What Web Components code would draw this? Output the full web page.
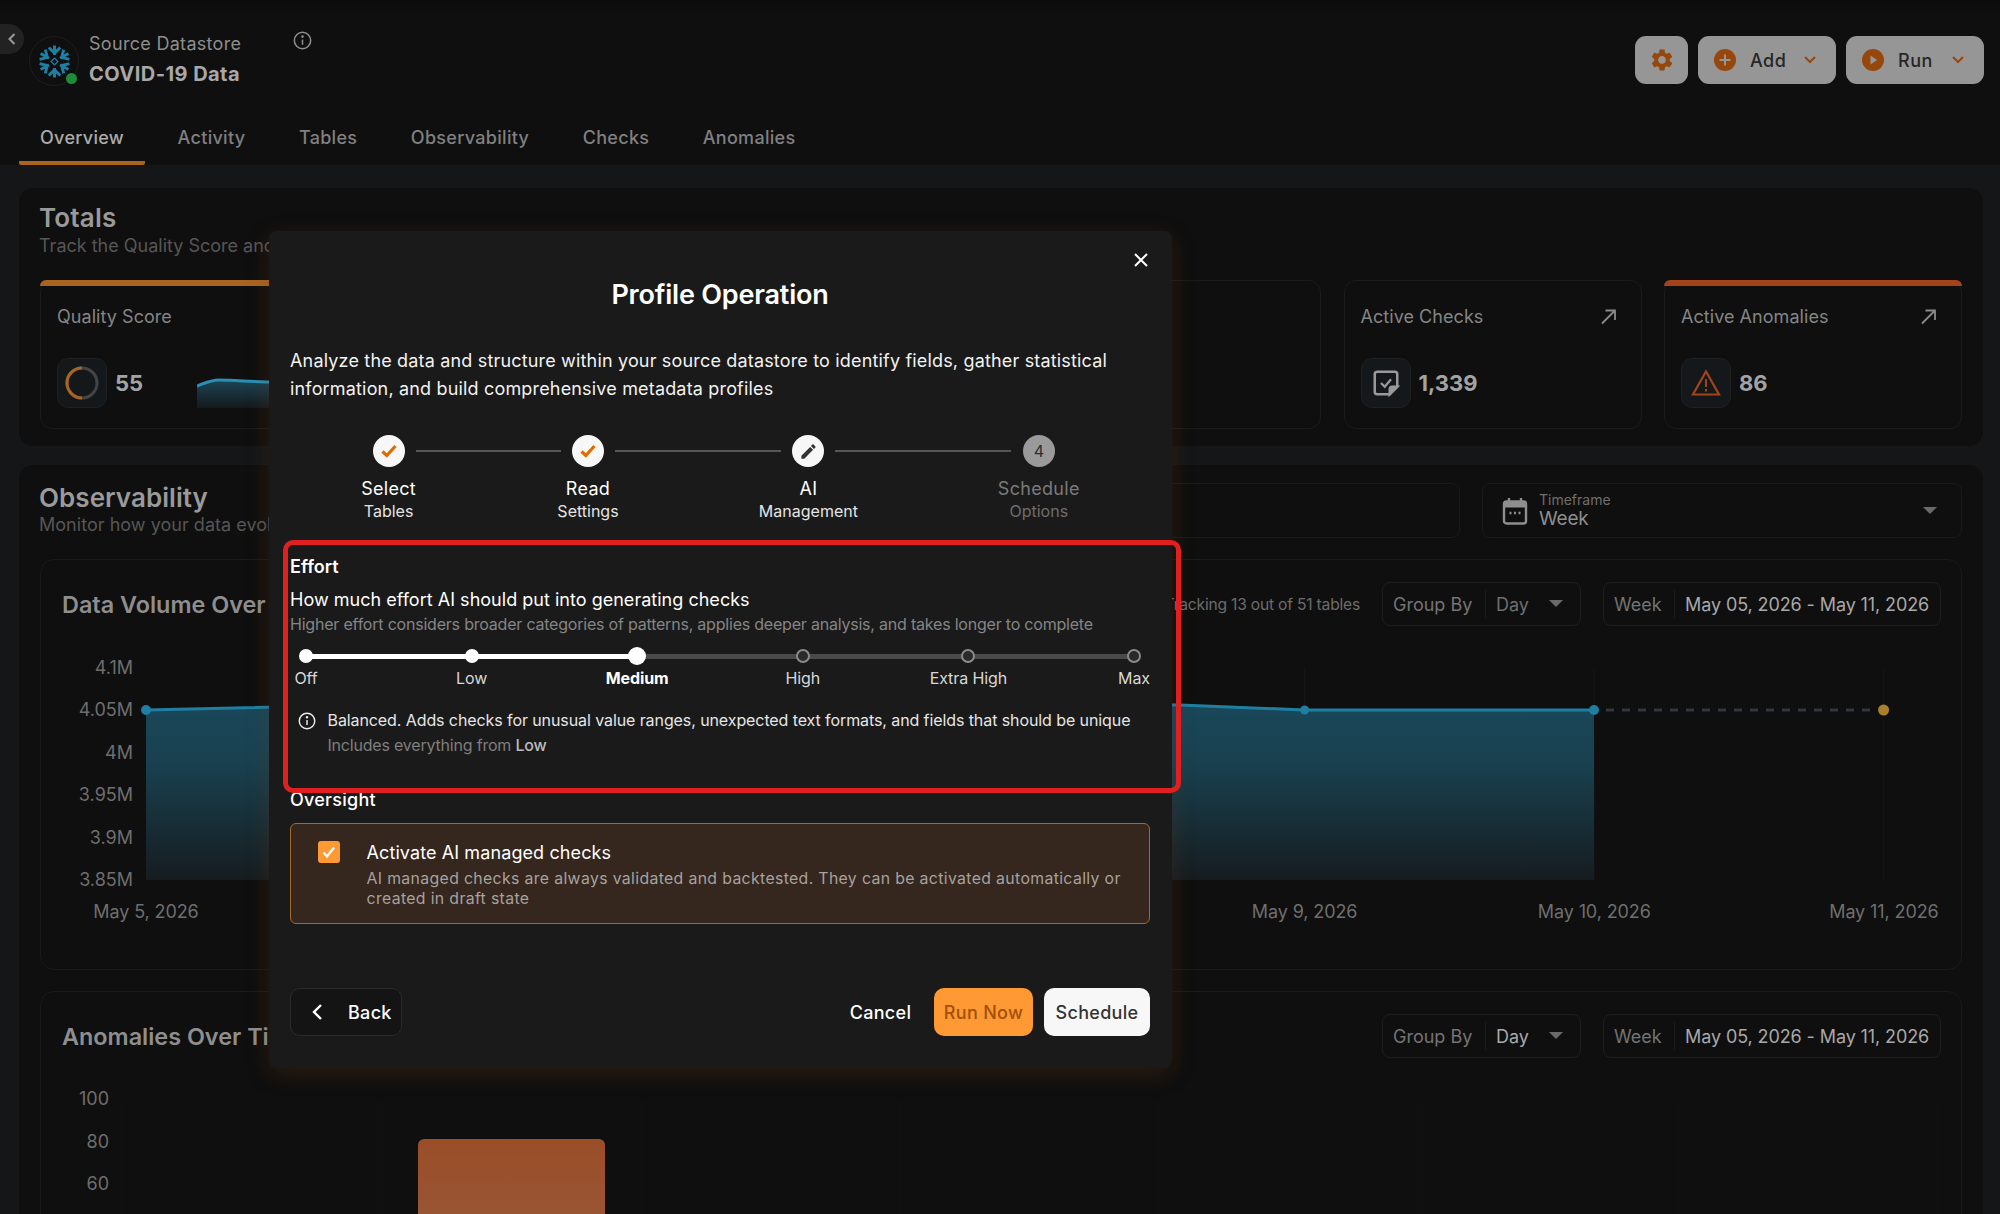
<!DOCTYPE html>
<html><head><meta charset="utf-8">
<style>
html,body{margin:0;padding:0;background:#141618;}
body{font-family:Inter,"Liberation Sans",sans-serif;letter-spacing:-.2px;}
</style></head><body>
<app-shell></app-shell>
<script>
function comp(name, css, html){
  customElements.define(name, class extends HTMLElement{
    constructor(){super();const t=document.createElement('template');t.innerHTML='<style>'+css+'</style>'+html;this.attachShadow({mode:'open'}).appendChild(t.content.cloneNode(true));}
  });
}
const chev='<svg width="16" height="16" viewBox="0 0 16 16" fill="none" stroke="#96480c" stroke-width="2" style="display:block"><path d="M3 5l5 5 5-5"/></svg>';
const caret=`<svg width="14" height="8" viewBox="0 0 14 8" style="display:block"><path d="M0 0h14L7 7z" fill="#6a6a6a"/></svg>`;
const arrow='<svg width="17" height="17" viewBox="0 0 17 17" fill="none" stroke="#8a8a8a" stroke-width="1.8" style="display:block"><path d="M2 15.5L15 2.5M5.5 2.5H15V12"/></svg>';
const info=(c,s)=>`<svg width="${s}" height="${s}" viewBox="0 0 20 20" fill="none" stroke="${c}" stroke-width="1.6"><circle cx="10" cy="10" r="8.6"/><path d="M10 9v5.5"/><circle cx="10" cy="5.9" r=".6" fill="${c}"/></svg>`;
const gear='M19.14 12.94c.04-.3.06-.61.06-.94 0-.32-.02-.64-.07-.94l2.03-1.58c.18-.14.23-.41.12-.61l-1.92-3.32c-.12-.22-.37-.29-.59-.22l-2.39.96c-.5-.38-1.03-.7-1.62-.94l-.36-2.54c-.04-.24-.24-.41-.48-.41h-3.84c-.24 0-.43.17-.47.41l-.36 2.54c-.59.24-1.13.57-1.62.94l-2.39-.96c-.22-.08-.47 0-.59.22L2.74 8.87c-.12.21-.08.47.12.61l2.03 1.58c-.05.3-.09.63-.09.94s.02.64.07.94l-2.03 1.58c-.18.14-.23.41-.12.61l1.92 3.32c.12.22.37.29.59.22l2.39-.96c.5.38 1.03.7 1.62.94l.36 2.54c.05.24.24.41.48.41h3.84c.24 0 .44-.17.47-.41l.36-2.54c.59-.24 1.13-.56 1.62-.94l2.39.96c.22.08.47 0 .59-.22l1.92-3.32c.12-.22.07-.47-.12-.61l-2.01-1.58zM12 15.6c-1.98 0-3.6-1.62-3.6-3.6s1.62-3.6 3.6-3.6 3.6 1.62 3.6 3.6-1.62 3.6-3.6 3.6z';

comp('top-btn',`:host{display:flex;align-items:center;box-sizing:border-box;height:48px;background:#969696;border-radius:11px;color:#262626;font-size:18px;font-weight:500;padding:0 18px 0 16px;letter-spacing:.5px}
 .t{flex:1;margin-left:14px}
 :host([icon]){padding:0;justify-content:center;width:53px}
 :host([icon]) .t{display:none}`,
 `<slot name="icon"></slot><span class="t"><slot></slot></span><slot name="chev"></slot>`);

comp('ds-header',`:host{display:block;height:165px;box-sizing:border-box;background:linear-gradient(#0b0b0b 0,#0f0f0f 12px);position:relative}
 .top{display:flex;align-items:flex-start;height:112px;box-sizing:border-box;padding:36px 16px 0 29px}
 .back{position:absolute;left:0;top:24px;width:24px;height:30px;background:#222;border-radius:0 15px 15px 0;display:flex;align-items:center;justify-content:center}
 .logo{width:50px;height:50px;box-sizing:border-box;border:1px solid #1e1e1e;border-radius:50%;position:relative;flex:none;display:flex;align-items:center;justify-content:center}
 .dot{position:absolute;right:1px;bottom:1.5px;width:11px;height:11px;border-radius:50%;background:#1f8a3a}
 .names{margin-left:10px;margin-top:-5px;width:204px}
 .a{font-size:18px;line-height:26px;color:#8e8e8e;letter-spacing:.3px}
 .b{font-size:20px;line-height:30px;color:#a8a8a8;font-weight:700;margin-top:2px;letter-spacing:.45px}
 .i{margin-top:-5px;}
 .btns{margin-left:auto;display:flex;gap:10px}
 nav{display:flex;padding-left:19px;height:53px;box-sizing:border-box;gap:11.5px}
 nav span{font-size:18px;font-weight:500;color:#808080;padding:0 21px;line-height:51px;height:53px;box-sizing:border-box;letter-spacing:.3px}
 nav span.on{color:#ababab;border-bottom:4px solid #a9651f;border-radius:0 0 2px 2px;}
 `,
 `<div class="back"><svg width="10" height="14" viewBox="0 0 10 14" fill="none" stroke="#9a9a9a" stroke-width="2"><path d="M7.5 2L2.5 7l5 5"/></svg></div>
 <div class="top"><div class="logo">
 <svg width="33" height="33" viewBox="-18 -18 36 36" fill="none" stroke="#1f7fa3" stroke-width="3.2">
  <rect x="-2.6" y="-2.6" width="5.2" height="5.2" transform="rotate(45)" stroke-width="1.4"/>
  ${[0,60,120,180,240,300].map(r=>`<path transform="rotate(${r})" d="M0 -7V-17.5M-6.2 -15.2L0 -9L6.2 -15.2"/>`).join('')}
 </svg><span class="dot"></span></div>
 <div class="names"><div class="a">Source Datastore</div><div class="b">COVID-19 Data</div></div>
 <div class="i">${info('#8e8e8e',19)}</div>
 <div class="btns">
  <top-btn icon><svg width="26" height="26" viewBox="0 0 24 24" fill="#96480c" slot="icon"><path d="${gear}"/></svg></top-btn>
  <top-btn style="width:138px"><svg slot="icon" width="22" height="22" viewBox="0 0 22 22"><circle cx="11" cy="11" r="11" fill="#96480c"/><path d="M11 5.5v11M5.5 11h11" stroke="#969696" stroke-width="2"/></svg>Add<span slot="chev">${chev}</span></top-btn>
  <top-btn style="width:138px"><svg slot="icon" width="22" height="22" viewBox="0 0 22 22"><circle cx="11" cy="11" r="11" fill="#96480c"/><path d="M8.5 6.5l6.5 4.5-6.5 4.5z" fill="#969696"/></svg>Run<span slot="chev">${chev}</span></top-btn>
 </div></div>
 <nav><span class="on">Overview</span><span>Activity</span><span>Tables</span><span>Observability</span><span>Checks</span><span>Anomalies</span></nav>`);

comp('kpi-card',`:host{display:block;box-sizing:border-box;height:149px;border:1px solid #1c1c1c;border-radius:12px;--accent:transparent}
 .bar{height:6px;margin:-1px -1px 0;background:var(--accent);border-radius:10px 10px 0 0}
 .head{display:flex;justify-content:space-between;align-items:center;height:24px;margin:18px 24px 0 16px;font-size:18px;color:#858585;letter-spacing:.05px}
 .row{display:flex;align-items:center;margin:30px 0 0 16px}
 .tile{width:50px;height:50px;box-sizing:border-box;border-radius:11px;background:#15181a;border:1px solid #1e2022;display:flex;align-items:center;justify-content:center;flex:none}
 .v{font-size:22px;font-weight:700;color:#a3a3a3;margin-left:8px;letter-spacing:0}`,
 `<div class="bar"></div><div class="head"><span><slot name="title"></slot></span><slot name="arrow"></slot></div>
 <div class="row"><div class="tile"><slot name="icon"></slot></div><span class="v"><slot name="value"></slot></span><slot name="extra"></slot></div>`);

comp('totals-panel',`:host{display:block;height:258px;box-sizing:border-box;background:#0f0f0f;border-radius:14px;padding:14px 21px 0 20px}
 h2{margin:0;font-size:26px;line-height:32px;font-weight:600;color:#9a9a9a;letter-spacing:.2px}
 p{margin:0;font-size:18px;line-height:24px;color:#565656;letter-spacing:0}
 .g{display:grid;grid-template-columns:1fr 298px 298px 298px;gap:22.5px;margin:22px 0 0 1px}`,
 `<h2>Totals</h2><p>Track the Quality Score and key metrics</p>
 <div class="g">
 <kpi-card style="--accent:#a9651f"><span slot="title">Quality Score</span>
  <svg slot="icon" width="34" height="34" viewBox="0 0 34 34" fill="none" stroke-width="3"><circle cx="17" cy="17" r="15" stroke="#444"/><path d="M17 2A15 15 0 0 0 17 32" stroke="#a9651f"/></svg>
  <span slot="value">55</span>
  <svg slot="extra" width="300" height="30" viewBox="0 0 300 30" style="margin-left:54px;align-self:flex-end">
   <defs><linearGradient id="s" x1="0" y1="0" x2="0" y2="1"><stop offset="0" stop-color="#1d4556"/><stop offset="1" stop-color="#14191c"/></linearGradient></defs>
   <path d="M0 8C8 5 14 2 22 2C40 2 55 4 80 4C120 4 200 4 300 4V30H0z" fill="url(#s)"/><path d="M0 8C8 5 14 2 22 2C40 2 55 4 80 4C120 4 200 4 300 4" fill="none" stroke="#2a8fb5" stroke-width="3"/></svg>
 </kpi-card>
 <kpi-card></kpi-card>
 <kpi-card><span slot="title">Active Checks</span><span slot="arrow">${arrow}</span>
  <svg slot="icon" width="30" height="30" viewBox="0 0 24 24" fill="none" stroke="#999" stroke-width="2"><path d="M5 3h14a2 2 0 0 1 2 2v10l-6 6H5a2 2 0 0 1-2-2V5a2 2 0 0 1 2-2z"/><path d="M21 15h-4a2 2 0 0 0-2 2v4z" fill="#999"/><path d="M8 12l3 3 5-6" stroke-width="1.8"/></svg>
  <span slot="value">1,339</span></kpi-card>
 <kpi-card style="--accent:#a3431a"><span slot="title">Active Anomalies</span><span slot="arrow">${arrow}</span>
  <svg slot="icon" width="30" height="28" viewBox="0 0 30 28" fill="none" stroke="#a3431a" stroke-width="2.2"><path d="M15 2.5L28 25.5H2z"/><path d="M15 10v8M15 20v2.5" stroke-width="2"/></svg>
  <span slot="value">86</span></kpi-card>
 </div>`);

comp('pair-box',`:host{display:grid;grid-template-columns:var(--lw) 1px 1fr auto;align-items:center;box-sizing:border-box;height:44px;border:1px solid #1e1e1e;border-radius:8px;font-size:18px;color:#747474;padding:0 11px 0 10px;white-space:nowrap;letter-spacing:0}
 .d{height:28px;background:#1c1c1c}
 .v{margin-left:10px;color:var(--val,#a8a8a8);letter-spacing:-.1px}`,
 `<span><slot name="label"></slot></span><span class="d"></span><span class="v"><slot></slot></span><slot name="tail"></slot>`);

comp('chart-card',`:host{display:block;box-sizing:border-box;border:1px solid #1a1a1a;border-radius:14px;padding:22px 20px 0 21px}
 .h{display:flex;align-items:center;height:44px}
 h3{margin:0;font-size:23.4px;font-weight:600;color:#8e8e8e;letter-spacing:0;white-space:nowrap}
 .c{margin-left:auto;display:flex;align-items:center;gap:22px}`,
 `<div class="h"><h3><slot name="title"></slot></h3><div class="c"><slot name="controls"></slot></div></div><slot></slot>`);

comp('volume-chart',`:host{display:block;padding-top:32px;font-size:18px;color:#6e6e6e;letter-spacing:0}
 .b{display:flex}
 .y{width:70px;height:232px;display:flex;flex-direction:column;justify-content:space-between;text-align:right;line-height:20px;flex:none}
 svg{display:block;margin:10px 0 0 13px;overflow:visible}
 .x{display:flex;justify-content:space-between;width:1738px;margin:11px 0 0 83px;line-height:22px;height:48px;letter-spacing:-.1px}
 .x span{width:0;display:flex;justify-content:center;white-space:nowrap}`,
 `<div class="b"><div class="y"><span>4.1M</span><span>4.05M</span><span>4M</span><span>3.95M</span><span>3.9M</span><span>3.85M</span></div>
 <svg width="1738" height="212" viewBox="0 0 1738 212" fill="none">
 <defs><linearGradient id="a" x1="0" y1="0" x2="0" y2="1"><stop offset="0" stop-color="#19485a"/><stop offset=".35" stop-color="#19404f"/><stop offset="1" stop-color="#161c1f"/></linearGradient></defs>
 <path d="M1158.6 0V212M1737.6 0V212M1448 0V212" stroke="#161616"/>
 <path d="M0 42L289 35.5L579 35L868 35L1034 37L1158.6 42L1448 42V212H0z" fill="url(#a)"/>
 <path d="M0 42L289 35.5L579 35L868 35L1034 37L1158.6 42L1448 42" stroke="#1f7fa3" stroke-width="3"/>
 <path d="M1460 42H1730" stroke="#303644" stroke-width="3" stroke-dasharray="8 8"/>
 <circle cx="0" cy="42" r="5" fill="#1f7fa3"/><circle cx="1158.6" cy="42" r="4.5" fill="#1f7fa3"/><circle cx="1448" cy="42" r="5" fill="#1f7fa3"/><circle cx="1737.6" cy="42" r="5.500" fill="#a9802a"/>
 </svg></div>
 <div class="x"><span>May 5, 2026</span><span></span><span></span><span></span><span>May 9, 2026</span><span>May 10, 2026</span><span>May 11, 2026</span></div>`);

comp('anomaly-chart',`:host{display:block;padding-top:31px;font-size:18px;color:#6e6e6e;letter-spacing:0}
 .b{display:flex}
 .y{width:46px;display:flex;flex-direction:column;gap:22.5px;text-align:right;line-height:20px;flex:none}
 svg{display:block;margin:10px 0 0 13px;overflow:visible}`,
 `<div class="b"><div class="y"><span>100</span><span>80</span><span>60</span></div>
 <svg width="1818" height="200" viewBox="0 0 1818 200" fill="none">
 <defs><linearGradient id="b" x1="0" y1="0" x2="0" y2="1"><stop offset="0" stop-color="#994e28"/><stop offset="1" stop-color="#9a5c3e"/></linearGradient></defs>
 <path d="M0 0V200M259 0V200M519 0V200M778 0V200M1037 0V200M1297 0V200M1557 0V200M1816 0V200" stroke="#131313"/>
 <path d="M296 46a6 6 0 0 1 6-6H477a6 6 0 0 1 6 6V200H296z" fill="url(#b)"/>
 </svg></div>`);

comp('obs-panel',`:host{display:block;box-sizing:border-box;height:760px;background:#0f0f0f;border-radius:14px 14px 0 0;padding:18px 21px 0 20px}
 .h{display:flex;gap:22px;height:55px}
 .tt{flex:1}
 h2{margin:0;font-size:26px;line-height:30px;font-weight:600;color:#9a9a9a;letter-spacing:.05px}
 p{margin:0;font-size:18px;line-height:24px;color:#565656;letter-spacing:.03px}
 .box{width:480px;box-sizing:border-box;border:1px solid #1a1a1a;border-radius:8px}
 .tf{display:flex;align-items:center;padding-left:19px;padding-right:24px}
 .tf .l{margin-left:11px;flex:1}
 .tf small{display:block;font-size:14px;line-height:16px;color:#6e6e6e;letter-spacing:0}
 .tf b{display:block;font-size:19px;line-height:22px;font-weight:400;color:#8e8e8e}
 .cards{display:flex;flex-direction:column;gap:21px;margin:21px 0 0 1px}
 .track{font-size:15.6px;color:#6c6c6c;}`,
 `<div class="h"><div class="tt"><h2>Observability</h2><p>Monitor how your data evolves over time</p></div><div class="box"></div>
 <div class="box tf"><svg width="26" height="28" viewBox="0 0 26 28" fill="none"><rect x="2" y="4.5" width="22" height="22" rx="2.5" stroke="#8e8e8e" stroke-width="2.4"/><rect x="2" y="4.5" width="22" height="6" fill="#8e8e8e"/><path d="M7 1v5M19 1v5" stroke="#8e8e8e" stroke-width="2.4"/><path d="M7.5 16h2M12 16h2M16.500 16h2" stroke="#8e8e8e" stroke-width="2.4"/></svg>
 <div class="l"><small>Timeframe</small><b>Week</b></div>${caret}</div></div>
 <div class="cards">
 <chart-card style="height:411px"><span slot="title">Data Volume Over Time</span>
  <span slot="controls" class="track">Tracking 13 out of 51 tables</span>
  <pair-box slot="controls" style="width:199px;--lw:92px;--val:#6e6e6e"><span slot="label">Group By</span>Day<span slot="tail" style="margin-right:6px">${caret}</span></pair-box>
  <pair-box slot="controls" style="width:338px;--lw:60px"><span slot="label">Week</span>May 05, 2026 - May 11, 2026</pair-box>
  <volume-chart style="margin-left:1px"></volume-chart></chart-card>
 <chart-card style="height:400px"><span slot="title">Anomalies Over Time</span>
  <pair-box slot="controls" style="width:199px;--lw:92px"><span slot="label">Group By</span>Day<span slot="tail" style="margin-right:6px">${caret}</span></pair-box>
  <pair-box slot="controls" style="width:338px;--lw:60px"><span slot="label">Week</span>May 05, 2026 - May 11, 2026</pair-box>
  <anomaly-chart style="margin-left:1px"></anomaly-chart></chart-card>
 </div>`);

comp('step-item',`:host{display:flex;flex-direction:column;align-items:center;width:32px;flex:none;white-space:nowrap;color:#fff}
 .c{width:32px;height:32px;border-radius:50%;background:#f7f7f7;display:flex;align-items:center;justify-content:center;color:#333;font-size:16px}
 .a{font-size:18px;line-height:24px;margin-top:10px;letter-spacing:.3px}
 .b{font-size:16px;line-height:21px;color:#e4e4e4;letter-spacing:0}
 :host([off]) .c{background:#9a9a9a;color:#2e2e2e}
 :host([off]) .a{color:#7a7a7a}:host([off]) .b{color:#6e6e6e}`,
 `<div class="c"><slot name="icon"></slot></div><div class="a"><slot name="a"></slot></div><div class="b"><slot name="b"></slot></div>`);

const tick='<svg slot="icon" width="18" height="18" viewBox="0 0 18 18" fill="none" stroke="#e06c00" stroke-width="3.200"><path d="M2.500 9.500l4.300 4L15.500 4"/></svg>';
comp('step-line',`:host{display:block;height:2px;background:#555;margin:15px 11.4px 0 11px;flex:none;width:var(--w)}`,'');
comp('op-stepper',`:host{display:flex;padding-left:82.600px;margin-top:32.5px;height:88px}`,
 `<step-item>${tick}<span slot="a">Select</span><span slot="b">Tables</span></step-item><step-line style="--w:145px"></step-line>
 <step-item>${tick}<span slot="a">Read</span><span slot="b">Settings</span></step-item><step-line style="--w:166px"></step-line>
 <step-item><svg slot="icon" width="19" height="19" viewBox="0 0 24 24" fill="#333"><path d="M3 17.250V21h3.750L17.810 9.940l-3.750-3.750L3 17.250zM20.710 7.040c.39-.39.39-1.020 0-1.410l-2.340-2.340c-.39-.39-1.020-.39-1.410 0l-1.830 1.830 3.750 3.750 1.830-1.830z"/></svg><span slot="a">AI</span><span slot="b">Management</span></step-item><step-line style="--w:176px"></step-line>
 <step-item off><span slot="icon">4</span><span slot="a">Schedule</span><span slot="b">Options</span></step-item>`);

comp('effort-slider',`:host{display:block;position:relative;height:41px;margin:10px 16px 0 16px}
 .t{position:absolute;left:0;right:0;top:6.500px;height:5px;background:#4a4a4a;border-radius:3px}
 .f{position:absolute;left:0;width:40%;top:6.500px;height:5px;background:#fff}
 .s{position:relative;display:flex;justify-content:space-between}
 .p{width:0;display:flex;flex-direction:column;align-items:center;font-size:16px;color:#d8d8d8;white-space:nowrap;letter-spacing:-.1px}
 .d{height:18px;display:flex;align-items:center}
 .d i{display:block;width:14px;height:14px;border-radius:50%;background:#fff;box-sizing:border-box}
 .p.o .d i{background:#2a2a2a;border:2px solid #8a8a8a}
 .p.m .d i{width:18px;height:18px}
 .p.m{color:#fff;font-weight:700}
 .l{line-height:22px;margin-top:2px}`,
 `<div class="t"></div><div class="f"></div><div class="s">
 <div class="p"><div class="d"><i></i></div><div class="l">Off</div></div>
 <div class="p"><div class="d"><i></i></div><div class="l">Low</div></div>
 <div class="p m"><div class="d"><i></i></div><div class="l">Medium</div></div>
 <div class="p o"><div class="d"><i></i></div><div class="l">High</div></div>
 <div class="p o"><div class="d"><i></i></div><div class="l">Extra High</div></div>
 <div class="p o"><div class="d"><i></i></div><div class="l">Max</div></div></div>`);

comp('effort-section',`:host{display:block;position:relative;z-index:2;box-sizing:border-box;height:253px;border:5px solid #e02020;border-radius:10px;padding:11px 0 0 2px;margin:17px -31px 0 -7px;color:#fff}
 h4{margin:0;font-size:18px;line-height:22px;font-weight:600;letter-spacing:0}
 .q{font-size:18px;line-height:24px;margin-top:10px;letter-spacing:.02px}
 .h{font-size:16px;line-height:22px;color:#858585;margin-top:1px;letter-spacing:-.21px}
 .w{width:860px}
 .i{display:flex;margin:20px 0 0 7.5px;gap:12px;font-size:16px;line-height:24.500px;color:#e6e6e6;letter-spacing:-.09px;white-space:nowrap}
 .i svg{margin-top:4px;flex:none}
 .n{color:#7e7e7e;letter-spacing:-.2px}.n b{font-weight:500;color:#bcbcbc}`,
 `<div class="w"><h4>Effort</h4><div class="q">How much effort AI should put into generating checks</div>
 <div class="h">Higher effort considers broader categories of patterns, applies deeper analysis, and takes longer to complete</div>
 <div style="height:2px"></div><effort-slider></effort-slider>
 <div class="i">${info('#ededed',18)}<div>Balanced. Adds checks for unusual value ranges, unexpected text formats, and fields that should be unique<div class="n">Includes everything from <b>Low</b></div></div></div></div>`);

comp('oversight-section',`:host{display:block;color:#fff;margin-top:-5px}
 h4{margin:0;font-size:18px;line-height:24px;font-weight:500;letter-spacing:.25px}
 .c{display:flex;box-sizing:border-box;height:101px;margin-top:11px;background:#35261e;border:1px solid #a36a2c;border-radius:6px;padding:17px 20px 0 26.500px;gap:27px}
 .k{width:22px;height:22px;background:#ff9933;border-radius:3px;display:flex;align-items:center;justify-content:center;flex:none}
 .t{font-size:18px;line-height:24px;letter-spacing:.1px}
 .d{font-size:15.800px;line-height:19.500px;color:#a6a29e;margin-top:4px;letter-spacing:.36px}`,
 `<h4>Oversight</h4><div class="c"><div class="k"><svg width="16" height="16" viewBox="0 0 16 16" fill="none" stroke="#fff" stroke-width="2.200"><path d="M2.500 8.500l3.500 4 7-9"/></svg></div>
 <div><div class="t">Activate AI managed checks</div><div class="d">AI managed checks are always validated and backtested. They can be activated automatically or created in draft state</div></div></div>`);

comp('modal-btn',`:host{display:inline-flex;align-items:center;justify-content:center;box-sizing:border-box;height:48px;border-radius:10px;font-size:18px;font-weight:500;color:#fff;white-space:nowrap;letter-spacing:.3px}`,`<slot></slot>`);

comp('profile-modal',`:host{display:block;position:absolute;left:269px;top:231px;width:903px;height:837px;box-sizing:border-box;background:#1a1a1a;border-radius:8px;padding:45px 22px 0 21px;color:#fff;box-shadow:0 6px 22px rgba(120,60,20,.26)}
 .x{position:absolute;right:23px;top:21px}
 h1{margin:1px 0 -1px;text-align:center;font-size:27px;line-height:36px;font-weight:600;letter-spacing:-.2px}
 .d{margin-top:34.5px;font-size:18px;line-height:28px;color:#f2f2f2;letter-spacing:.17px}
 .f{display:flex;align-items:center;margin-top:64px}
 .r{margin-left:auto;display:flex;align-items:center;gap:11px}`,
 `<div class="x"><svg width="16" height="16" viewBox="0 0 16 16" stroke="#fff" stroke-width="2"><path d="M2 2l12 12M14 2L2 14"/></svg></div>
 <h1>Profile Operation</h1>
 <div class="d">Analyze the data and structure within your source datastore to identify fields, gather statistical information, and build comprehensive metadata profiles</div>
 <op-stepper></op-stepper>
 <effort-section></effort-section>
 <oversight-section></oversight-section>
 <div class="f"><modal-btn style="width:112px;background:#141414;border:1px solid #2a2a2a;gap:25px;justify-content:flex-start;padding-left:20px"><svg width="12" height="20" viewBox="0 0 12 20" fill="none" stroke="#fff" stroke-width="2.400"><path d="M10 3L3 10l7 7"/></svg>Back</modal-btn>
 <div class="r"><modal-btn style="width:85px">Cancel</modal-btn><modal-btn style="width:99px;background:#ff9933;color:#a0500a">Run Now</modal-btn><modal-btn style="width:106px;background:#f7f7f7;color:#333">Schedule</modal-btn></div></div>`);

comp('app-shell',`:host{display:block;position:relative;width:2000px;height:1214px;overflow:hidden;background:#141618;font-family:Inter,"Liberation Sans",sans-serif}
 .m{display:flex;flex-direction:column;gap:19px;padding:23px 17px 0 19px}`,
 `<ds-header></ds-header><div class="m"><totals-panel></totals-panel><obs-panel></obs-panel></div><profile-modal></profile-modal>`);
</script>
</body></html>
